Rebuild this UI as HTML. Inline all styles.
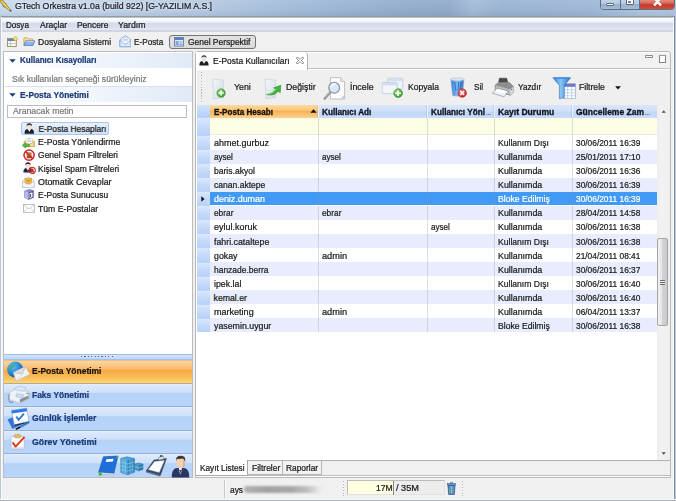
<!DOCTYPE html>
<html><head><meta charset="utf-8"><title>GTech Orkestra</title>
<style>
*{box-sizing:border-box;margin:0;padding:0}
html,body{width:676px;height:501px;overflow:hidden}
body{position:relative;background:#f0f0f0;font-family:"Liberation Sans",sans-serif;font-size:8.4px;color:#1a1a1a}
.a{position:absolute}
.t{position:absolute;white-space:nowrap;-webkit-text-stroke:0.22px currentColor;line-height:12px;height:12px;transform-origin:0 50%;letter-spacing:0}
#title{left:0;top:0;width:676px;height:16.5px;background:linear-gradient(180deg,rgba(255,255,255,0.10) 0,rgba(255,255,255,0) 60%,rgba(60,80,110,0.10) 100%),linear-gradient(100deg,#c8d9eb 0,#c0d2e7 15%,#b4c8e1 30%,#a0b9d6 45%,#93adcb 58%,#8fa9c8 66%,#a3bad6 70%,#99b2d0 74%,#9fb7d4 88%,#aec4dd 94%,#b0c5de 100%)}
#client{left:0;top:16.8px;width:676px;height:484.5px;background:#f0f0f0}
#menubar{left:1px;top:16px;width:673px;height:16px;background:linear-gradient(180deg,#8e9aa4 0,#8e9aa4 1.3px,#ffffff 1.8px,#ffffff 3.2px,#eef1f9 5.4px,#e4e8f4 6.9px,#d3d8ec 7.3px,#d8ddef 10px,#e2e6f4 14px,#d0d5e0 14.5px,#d0d5e0 15.6px,#f0f0f0 15.9px)}
.nb{left:3.8px;width:187.8px;height:23.6px;background:linear-gradient(180deg,#dce9fc 0,#d0e1fb 34%,#b5d2f9 40%,#bad5fa 100%);border-bottom:1px solid #8fb0e0;border-top:1px solid #e3edfc}
</style></head><body>
<div class="a" id="title"></div>
<div class="a" id="client"></div>
<div class="a" id="menubar"></div>

<div class="a" style="left:0;top:16.5px;width:0.9px;height:484.5px;background:#bcc6d3"></div>
<div class="a" style="left:0.9px;top:16.5px;width:0.8px;height:484.5px;background:#f8f9fb"></div>
<div class="a" style="left:673.2px;top:17px;width:0.9px;height:483px;background:#fbfbfc"></div><div class="a" style="left:674.1px;top:16.3px;width:1px;height:484.7px;background:#838e9c"></div>
<div class="a" style="left:675px;top:10px;width:1px;height:491px;background:#b0c4da"></div>
<div class="a" style="left:0;top:499.7px;width:676px;height:1.3px;background:linear-gradient(180deg,#b8bec6,#9aa3ad)"></div>
<div class="a" style="left:0;top:499px;width:676px;height:0.7px;background:#fafafa"></div>
<!-- title buttons -->
<div class="a" style="left:599.5px;top:-3px;width:75px;height:12.8px;border:1px solid #5c6f8a;border-radius:0 0 3.5px 3.5px;overflow:hidden;background:#a9c0dc">
  <div class="a" style="left:0;top:0;width:20.3px;height:13px;background:linear-gradient(180deg,#c9d9ea 0,#b3c8e0 45%,#98b1cf 50%,#a8c0dc 100%);border-right:1px solid #5c6f8a"></div>
  <div class="a" style="left:20.3px;top:0;width:19.3px;height:13px;background:linear-gradient(180deg,#c9d9ea 0,#b3c8e0 45%,#98b1cf 50%,#a8c0dc 100%);border-right:1px solid #5c6f8a"></div>
  <div class="a" style="left:39.6px;top:0;width:36px;height:13px;background:linear-gradient(180deg,#e8a090 0,#d8675a 40%,#c43a2c 52%,#cf4a35 80%,#e07a55 100%)"></div>
</div>
<div class="a" style="left:605.6px;top:2.9px;width:8.8px;height:3px;background:#fff;border:0.7px solid #5a6678;border-radius:1px"></div>
<div class="a" style="left:626px;top:-1px;width:7.6px;height:6.4px;background:#fff;border:0.7px solid #5a6678;border-radius:1px"></div>
<div class="a" style="left:628.4px;top:1.2px;width:2.8px;height:1.8px;background:#6c86a8"></div>
<svg class="a" style="left:653px;top:-2px" width="9" height="8" viewBox="0 0 9 8"><path d="M1.2 0 L4.5 3.4 L7.8 0 M1.2 7.4 L4.5 4 L7.8 7.4" stroke="#fff" stroke-width="2" fill="none"/><path d="M4.5 3.7 L1 0 M4.5 3.7 L8 0 M4.5 3.7 L1 7.4 M4.5 3.7 L8 7.4" stroke="#fff" stroke-width="1.9" fill="none"/></svg>
<!-- title icon (trumpet) -->
<svg class="a" style="left:0;top:0" width="13" height="13" viewBox="0 0 13 13"><path d="M0 0 L2.6 0 L4 2.2 Q5.4 2.4 5.6 3.8 Q7.2 4.4 7 5.8 L10.6 9.6 L9.6 10.6 L5.4 7.4 Q3.8 7.6 3.6 6 Q2.2 5.6 2.4 4.2 L0 1.4Z" fill="#dcc23a" stroke="#6a5a1c" stroke-width="0.55"/><path d="M1 0.6 L9.4 9.6" stroke="#fff6a8" stroke-width="0.6"/><circle cx="3.6" cy="6.4" r="0.6" fill="#3c4cd0"/><circle cx="10.6" cy="10.8" r="1" fill="#5a5a5a"/></svg>

<!-- perspective bar icons -->
<svg class="a" style="left:7px;top:35.8px" width="11" height="11" viewBox="0 0 13 13"><rect x="0.6" y="3" width="10.4" height="9.4" fill="#fbfaf2" stroke="#8a8568" stroke-width="1"/><rect x="1.1" y="3.5" width="9.4" height="2.4" fill="#5f86c2"/><path d="M4.2 5.9V12 M1 9H10.6" stroke="#b9b48f" stroke-width="0.8"/><path d="M10 0.2 L12.8 3.2 L10 6.2 L7.2 3.2Z" fill="#f9dc6a" stroke="#b8922a" stroke-width="0.6"/></svg>
<svg class="a" style="left:22.6px;top:37.2px" width="12.6" height="9.2" viewBox="0 0 13 10"><path d="M0.6 9 V1.6 Q0.6 0.8 1.4 0.8 H4 L5 2 H9.6 Q10.3 2 10.3 2.8 V4" fill="#f8e3a0" stroke="#c39a3e" stroke-width="0.8"/><path d="M0.7 9.3 L2.6 4.2 H12.4 L10.4 9.3 Z" fill="#8db3ea" stroke="#456fbc" stroke-width="0.8"/><path d="M3 5 H11.6" stroke="#d3e3f8" stroke-width="0.9"/></svg>
<svg class="a" style="left:118.6px;top:35.4px" width="12.8" height="12.6" viewBox="0 0 13 13"><path d="M0.7 5 L6.5 0.6 L12.3 5 V12.2 H0.7Z" fill="#e3edfb" stroke="#86a6dc" stroke-width="0.9"/><rect x="2.6" y="3" width="7.8" height="6" fill="#fff" stroke="#a9bfe4" stroke-width="0.6"/><path d="M3.8 4.6h5.4M3.8 6h5.4" stroke="#9cbbea" stroke-width="0.7"/><path d="M0.9 5.6 L6.5 9.6 L12.1 5.6 V12 H0.9Z" fill="#dce8fa" stroke="#86a6dc" stroke-width="0.7"/></svg>
<!-- Genel Perspektif button -->
<div class="a" style="left:169.4px;top:34.6px;width:86.2px;height:14.6px;border:1.2px solid #747474;border-radius:3px;background:linear-gradient(180deg,#e3e3e3,#dbdbdb)"></div>
<svg class="a" style="left:174.2px;top:37px" width="10" height="10" viewBox="0 0 10 10"><rect x="0.5" y="0.5" width="9" height="8.6" fill="#dfe8f6" stroke="#6b7f9e" stroke-width="0.9"/><rect x="0.9" y="0.9" width="8.2" height="2" fill="#4f79bd"/><rect x="1.6" y="4" width="3" height="4.2" fill="#7fa3dc"/><rect x="5.4" y="4" width="3" height="2" fill="#a9c3ea"/><rect x="5.4" y="6.6" width="3" height="1.6" fill="#7fa3dc"/></svg>
<!-- LEFT PANEL -->
<div class="a" style="left:2.8px;top:51.4px;width:189.8px;height:426.8px;background:#fff;border:1px solid #bdbdbd"></div>
<div class="a" style="left:3.8px;top:52.6px;width:187.8px;height:15px;background:linear-gradient(90deg,#ffffff 0,#f5f8fd 35%,#e0eaf7 100%)"></div>
<div class="a" style="left:3.8px;top:86px;width:187.8px;height:16px;background:linear-gradient(90deg,#ffffff 0,#f5f8fd 35%,#e0eaf7 100%);border-top:1px solid #d5e1f2"></div>
<svg class="a" style="left:8.8px;top:58.8px" width="7" height="4" viewBox="0 0 7 4"><path d="M0.2 0.2H6.8L3.5 3.8Z" fill="#1b3a78"/></svg>
<svg class="a" style="left:8.8px;top:93px" width="7" height="4" viewBox="0 0 7 4"><path d="M0.2 0.2H6.8L3.5 3.8Z" fill="#1b3a78"/></svg>
<div class="a" style="left:6.6px;top:104.6px;width:180.6px;height:13.2px;background:#fff;border:1px solid #b9bcc2"></div>
<!-- tree selection -->
<div class="a" style="left:21.2px;top:122.3px;width:87.9px;height:12.9px;border:1px solid #a9c5ee;border-radius:2px;background:linear-gradient(180deg,#e9f1fc,#d2e2f8)"></div>
<!-- splitter -->
<div class="a" style="left:3.8px;top:353.6px;width:187.8px;height:6.6px;background:linear-gradient(180deg,#d4e4fb,#bfd7fa);border-top:1px solid #9ebde8;border-bottom:1px solid #a4c0e6"></div>
<div class="a" style="left:80.5px;top:356.2px;width:32px;height:1.2px;background:repeating-linear-gradient(90deg,#4b6a9c 0,#4b6a9c 1.2px,transparent 1.2px,transparent 3.4px)"></div>
<!-- nav buttons -->
<div class="a" style="left:3.8px;top:360px;width:187.8px;height:23.6px;background:linear-gradient(180deg,#fbd6a5 0,#f9bb69 37%,#f7a842 43%,#f9bb56 72%,#fcd774 100%);border-top:1px solid #e9c08a;border-bottom:1px solid #b9a98a"></div>
<div class="a nb" style="top:383.6px"></div>
<div class="a nb" style="top:407.2px"></div>
<div class="a nb" style="top:430.8px"></div>
<div class="a nb" style="top:454.4px;height:22.8px;border-bottom:0"></div>
<!-- RIGHT PANEL (tab folder) -->
<div class="a" style="left:194.6px;top:51.3px;width:476.8px;height:427.2px;background:#fff;border:1.1px solid #b9b9b9;border-radius:3px 3px 0 0"></div>
<div class="a" style="left:197.3px;top:70.2px;width:472.6px;height:35.2px;background:#efefef"></div>
<div class="a" style="left:195.8px;top:52.6px;width:474.4px;height:16.8px;background:#f1f1f1;border-bottom:1px solid #c2c2c2"></div>
<div class="a" style="left:195.8px;top:52.4px;width:112.2px;height:18px;background:#fff;border-right:1px solid #b0b0b0;border-radius:0 3.5px 0 0"></div>
<!-- min/max -->
<div class="a" style="left:645.3px;top:55.2px;width:7.7px;height:2.9px;border:0.8px solid #8e8e8e;background:#fff;border-radius:0.8px"></div>
<div class="a" style="left:658.8px;top:55.2px;width:7.2px;height:7.4px;border:0.8px solid #858585;border-top:1.9px solid #9a9a9a;background:#fff"></div>
<!-- tab close -->
<svg class="a" style="left:295.6px;top:57.4px" width="8" height="7" viewBox="0 0 8 7"><path d="M0.6 0.6 L2.2 0.6 L4 2.4 L5.8 0.6 L7.4 0.6 L7.4 1.6 L5.4 3.5 L7.4 5.4 V6.4 H5.8 L4 4.6 L2.2 6.4 H0.6 V5.4 L2.6 3.5 L0.6 1.6Z" fill="#fff" stroke="#666" stroke-width="0.7"/></svg>
<!-- tab icon: person -->
<svg class="a" style="left:198.8px;top:55px" width="10" height="11" viewBox="0 0 10 11"><path d="M0.4 10.6 Q0.2 6.6 3 6 L5 8 L7 6 Q9.8 6.6 9.6 10.6Z" fill="#1c1f26"/><path d="M4.1 6.2 L5 9 L5.9 6.2Z" fill="#fff"/><ellipse cx="5" cy="3.4" rx="2.4" ry="2.9" fill="#f0e2d4"/><path d="M2.5 3 Q2.4 0.2 5 0.3 Q7.6 0.2 7.5 3 Q6.6 1.6 5 1.8 Q3.4 1.6 2.5 3Z" fill="#3a3a3a"/></svg>
<!-- toolbar handle -->
<div class="a" style="left:200.5px;top:72.4px;width:1.4px;height:30.6px;background:repeating-linear-gradient(180deg,#b4b4b4 0,#b4b4b4 1.3px,#fafafa 1.3px,#fafafa 2px,transparent 2px,transparent 2.9px)"></div>
<!-- TABLE -->
<div class="a" style="left:197.4px;top:105.2px;width:459.2px;height:355px;background:#fff"></div>
<!-- header -->
<div class="a" style="left:197.4px;top:105.2px;width:459.2px;height:12.5px;background:linear-gradient(180deg,#d9e6fb 0,#cfe0fa 45%,#c2d7f7 55%,#c9dcf9 100%)"></div>
<div class="a" style="left:210.2px;top:105.2px;width:108.3px;height:12.5px;background:linear-gradient(180deg,#fcdba6 0,#fbc978 35%,#f8b35a 50%,#fac274 75%,#fcd190 100%)"></div>
<svg class="a" style="left:309.8px;top:109.4px" width="7" height="3.9" viewBox="0 0 7 4"><path d="M0.2 3.8H6.8L3.5 0.2Z" fill="#111"/></svg>
<!-- filter row -->
<div class="a" style="left:210.2px;top:117.7px;width:446.4px;height:17.3px;background:#fefee6;border-bottom:1px solid #ececdc"></div>
<div class="a" style="left:210.2px;top:135.65px;width:446.4px;height:14.10px;background:#ffffff"></div>
<div class="a" style="left:210.2px;top:149.70px;width:446.4px;height:14.10px;background:#e8ecfc"></div>
<div class="a" style="left:210.2px;top:163.75px;width:446.4px;height:14.10px;background:#ffffff"></div>
<div class="a" style="left:210.2px;top:177.80px;width:446.4px;height:14.10px;background:#e8ecfc"></div>
<div class="a" style="left:210.2px;top:191.85px;width:446.4px;height:13.10px;background:#419af5"></div>
<div class="a" style="left:210.2px;top:205.90px;width:446.4px;height:14.10px;background:#e8ecfc"></div>
<div class="a" style="left:210.2px;top:219.95px;width:446.4px;height:14.10px;background:#ffffff"></div>
<div class="a" style="left:210.2px;top:234.00px;width:446.4px;height:14.10px;background:#e8ecfc"></div>
<div class="a" style="left:210.2px;top:248.05px;width:446.4px;height:14.10px;background:#ffffff"></div>
<div class="a" style="left:210.2px;top:262.10px;width:446.4px;height:14.10px;background:#e8ecfc"></div>
<div class="a" style="left:210.2px;top:276.15px;width:446.4px;height:14.10px;background:#ffffff"></div>
<div class="a" style="left:210.2px;top:290.20px;width:446.4px;height:14.10px;background:#e8ecfc"></div>
<div class="a" style="left:210.2px;top:304.25px;width:446.4px;height:14.10px;background:#ffffff"></div>
<div class="a" style="left:210.2px;top:318.30px;width:446.4px;height:14.10px;background:#e8ecfc"></div>
<div class="a" style="left:197.4px;top:105.2px;width:12.8px;height:227.15px;background:#bcd4f8"></div>
<div class="a" style="left:197.4px;top:105.2px;width:12.6px;height:12.3px;background:linear-gradient(180deg,#d3e3fb,#b4cff7)"></div>
<div class="a" style="left:197.4px;top:118px;width:12.6px;height:17.4px;background:linear-gradient(180deg,#dbe8fc 0,#c9dcfa 40%,#b9d2f8 100%)"></div>
<div class="a" style="left:197.4px;top:136.05px;width:12.6px;height:13.55px;background:linear-gradient(180deg,#dbe8fc 0,#c9dcfa 40%,#b9d2f8 100%)"></div>
<div class="a" style="left:197.4px;top:150.10px;width:12.6px;height:13.55px;background:linear-gradient(180deg,#dbe8fc 0,#c9dcfa 40%,#b9d2f8 100%)"></div>
<div class="a" style="left:197.4px;top:164.15px;width:12.6px;height:13.55px;background:linear-gradient(180deg,#dbe8fc 0,#c9dcfa 40%,#b9d2f8 100%)"></div>
<div class="a" style="left:197.4px;top:178.20px;width:12.6px;height:13.55px;background:linear-gradient(180deg,#dbe8fc 0,#c9dcfa 40%,#b9d2f8 100%)"></div>
<div class="a" style="left:197.4px;top:192.25px;width:12.6px;height:13.55px;background:linear-gradient(180deg,#dbe8fc 0,#c9dcfa 40%,#b9d2f8 100%)"></div>
<div class="a" style="left:197.4px;top:206.30px;width:12.6px;height:13.55px;background:linear-gradient(180deg,#dbe8fc 0,#c9dcfa 40%,#b9d2f8 100%)"></div>
<div class="a" style="left:197.4px;top:220.35px;width:12.6px;height:13.55px;background:linear-gradient(180deg,#dbe8fc 0,#c9dcfa 40%,#b9d2f8 100%)"></div>
<div class="a" style="left:197.4px;top:234.40px;width:12.6px;height:13.55px;background:linear-gradient(180deg,#dbe8fc 0,#c9dcfa 40%,#b9d2f8 100%)"></div>
<div class="a" style="left:197.4px;top:248.45px;width:12.6px;height:13.55px;background:linear-gradient(180deg,#dbe8fc 0,#c9dcfa 40%,#b9d2f8 100%)"></div>
<div class="a" style="left:197.4px;top:262.50px;width:12.6px;height:13.55px;background:linear-gradient(180deg,#dbe8fc 0,#c9dcfa 40%,#b9d2f8 100%)"></div>
<div class="a" style="left:197.4px;top:276.55px;width:12.6px;height:13.55px;background:linear-gradient(180deg,#dbe8fc 0,#c9dcfa 40%,#b9d2f8 100%)"></div>
<div class="a" style="left:197.4px;top:290.60px;width:12.6px;height:13.55px;background:linear-gradient(180deg,#dbe8fc 0,#c9dcfa 40%,#b9d2f8 100%)"></div>
<div class="a" style="left:197.4px;top:304.65px;width:12.6px;height:13.55px;background:linear-gradient(180deg,#dbe8fc 0,#c9dcfa 40%,#b9d2f8 100%)"></div>
<div class="a" style="left:197.4px;top:318.70px;width:12.6px;height:13.55px;background:linear-gradient(180deg,#dbe8fc 0,#c9dcfa 40%,#b9d2f8 100%)"></div>
<div class="a" style="left:318.1px;top:117.7px;width:1px;height:214.65px;background:rgba(150,150,155,0.30)"></div>
<div class="a" style="left:318.1px;top:105.2px;width:1px;height:12.5px;background:rgba(255,255,255,0.7)"></div>
<div class="a" style="left:317.1px;top:105.2px;width:1px;height:12.5px;background:rgba(120,150,200,0.25)"></div>
<div class="a" style="left:426.9px;top:117.7px;width:1px;height:214.65px;background:rgba(150,150,155,0.30)"></div>
<div class="a" style="left:426.9px;top:105.2px;width:1px;height:12.5px;background:rgba(255,255,255,0.7)"></div>
<div class="a" style="left:425.9px;top:105.2px;width:1px;height:12.5px;background:rgba(120,150,200,0.25)"></div>
<div class="a" style="left:493.9px;top:117.7px;width:1px;height:214.65px;background:rgba(150,150,155,0.30)"></div>
<div class="a" style="left:493.9px;top:105.2px;width:1px;height:12.5px;background:rgba(255,255,255,0.7)"></div>
<div class="a" style="left:492.9px;top:105.2px;width:1px;height:12.5px;background:rgba(120,150,200,0.25)"></div>
<div class="a" style="left:572.0px;top:117.7px;width:1px;height:214.65px;background:rgba(150,150,155,0.30)"></div>
<div class="a" style="left:572.0px;top:105.2px;width:1px;height:12.5px;background:rgba(255,255,255,0.7)"></div>
<div class="a" style="left:571.0px;top:105.2px;width:1px;height:12.5px;background:rgba(120,150,200,0.25)"></div>
<svg class="a" style="left:201.2px;top:196.45px" width="4" height="6" viewBox="0 0 4 6"><path d="M0.3 0.2V5.8L3.6 3Z" fill="#111"/></svg>
<!-- scrollbar -->
<div class="a" style="left:656.6px;top:105.2px;width:13.3px;height:354.6px;background:linear-gradient(90deg,#ececec,#f2f2f2 30%,#efefef)"></div>
<div class="a" style="left:657.2px;top:237.7px;width:11.3px;height:88.7px;border:1px solid #a4a4a4;border-radius:2px;background:linear-gradient(90deg,#f2f2f2 0,#e6e6e7 40%,#d0d1d4 52%,#c9cacd 100%)"></div>
<div class="a" style="left:660.2px;top:279.8px;width:4.8px;height:5.2px;background:repeating-linear-gradient(180deg,#707070 0,#707070 0.9px,#e8e8e8 0.9px,#e8e8e8 1.9px)"></div>
<svg class="a" style="left:660.8px;top:110px" width="5.4" height="3" viewBox="0 0 6 4"><path d="M0.2 3.6H5.8L3 0.3Z" fill="#4a4a4a"/></svg>
<svg class="a" style="left:660.8px;top:452px" width="5.4" height="3" viewBox="0 0 6 4"><path d="M0.2 0.4H5.8L3 3.7Z" fill="#4a4a4a"/></svg>
<!-- bottom tab strip -->
<div class="a" style="left:197.3px;top:459.8px;width:472.6px;height:16.4px;background:#f0f0f0;border-top:1px solid #b0b0b0;border-bottom:1px solid #bdbdbd"></div>
<div class="a" style="left:247.3px;top:460.8px;width:35.3px;height:14.6px;border-right:1px solid #b5b5b5;border-bottom:1px solid #b5b5b5;background:#f2f2f2"></div>
<div class="a" style="left:282.6px;top:460.8px;width:39.2px;height:14.6px;border-right:1px solid #b5b5b5;border-bottom:1px solid #b5b5b5;background:#f2f2f2"></div>
<div class="a" style="left:195.8px;top:459.8px;width:51.8px;height:16.4px;background:#fff;border-right:1px solid #a6a6a6;border-bottom:1px solid #a6a6a6;border-radius:0 0 2px 0"></div>
<!-- STATUS BAR -->
<div class="a" style="left:223.7px;top:479.6px;width:1px;height:18.6px;background:#c6c6c6"></div><div class="a" style="left:224.7px;top:479.6px;width:0.8px;height:18.6px;background:#fbfbfb"></div>
<div class="a" style="left:243.5px;top:486.2px;width:80px;height:6.6px;border-radius:3px;background:linear-gradient(90deg,#b2b2b2 0,#a2a2a2 30%,#a8a8a8 60%,rgba(176,176,176,0.75) 80%,rgba(215,215,215,0.35) 93%,rgba(240,240,240,0) 100%);filter:blur(1px)"></div>
<div class="a" style="left:342.8px;top:481px;width:1.2px;height:14.6px;background:repeating-linear-gradient(180deg,#b2b2b2 0,#b2b2b2 1.3px,#fafafa 1.3px,#fafafa 2px,transparent 2px,transparent 2.9px)"></div>
<div class="a" style="left:461.6px;top:481px;width:1.2px;height:14.6px;background:repeating-linear-gradient(180deg,#b2b2b2 0,#b2b2b2 1.3px,#fafafa 1.3px,#fafafa 2px,transparent 2px,transparent 2.9px)"></div>
<div class="a" style="left:347.4px;top:480.2px;width:98px;height:15.2px;background:linear-gradient(90deg,#ffffe1 0,#ffffe1 46px,#ededed 46px,#ededed 100%);border:1px solid #bcbcbc;border-right-color:#e2e2e2;border-bottom-color:#e2e2e2"></div>
<div class="a" style="left:393.4px;top:481px;width:0.9px;height:13.6px;background:#8a8a8a"></div>
<svg class="a" style="left:446.6px;top:481.6px" width="9" height="13" viewBox="0 0 9 13"><path d="M1 3 H8 L7.4 12.4 H1.6Z" fill="#3f7cc4" stroke="#28508c" stroke-width="0.7"/><path d="M3 4V11.6M4.5 4V11.6M6 4V11.6" stroke="#a9d4a8" stroke-width="0.7"/><rect x="0.4" y="1.6" width="8.2" height="1.5" fill="#6f9fd8" stroke="#28508c" stroke-width="0.5"/><rect x="3.2" y="0.5" width="2.6" height="1.1" fill="#8fb5e6" stroke="#2f5792" stroke-width="0.4"/></svg>
<!-- TREE ICONS -->
<svg class="a" style="left:23.6px;top:123.4px" width="10.6" height="11.2" viewBox="0 0 10 11"><path d="M0.4 10.6 Q0.2 6.6 3 6 L5 8 L7 6 Q9.8 6.6 9.6 10.6Z" fill="#1c1f26"/><path d="M4.1 6.2 L5 9 L5.9 6.2Z" fill="#fff"/><ellipse cx="5" cy="3.5" rx="2.4" ry="2.8" fill="#f0e2d4"/><path d="M2.4 3.2 Q2.2 0.2 5 0.3 Q7.8 0.2 7.6 3.2 Q6.6 1.8 5 2 Q3.4 1.8 2.4 3.2Z" fill="#333"/></svg>
<svg class="a" style="left:22.4px;top:136.6px" width="13" height="11.4" viewBox="0 0 13 11.4"><path d="M2.2 4.4 L7.2 0.8 L12.4 4.4 V9.6 H2.2Z" fill="#f2cf6b" stroke="#c79a2c" stroke-width="0.6"/><rect x="4" y="1.6" width="6.4" height="5" fill="#fff" stroke="#c9d3e6" stroke-width="0.5"/><path d="M5 3h4.4M5 4.4h4.4" stroke="#8fb0e6" stroke-width="0.6"/><path d="M2.3 4.8 L7.3 7.6 L12.3 4.8 V9.5 H2.3Z" fill="#f6dc8e" stroke="#c79a2c" stroke-width="0.5"/><path d="M0.2 8.4 L3.6 5.8 V7.4 H7.4 V9.6 H3.6 V11.2Z" fill="#4cb83c" stroke="#2a8a22" stroke-width="0.5"/></svg>
<svg class="a" style="left:22.8px;top:149.4px" width="12.2" height="12.2" viewBox="0 0 12 12"><rect x="3.6" y="3.4" width="4.8" height="5.6" rx="0.6" fill="#8a5a22"/><rect x="4.2" y="4.4" width="3.6" height="2" fill="#d9a441"/><circle cx="6" cy="6" r="5" fill="none" stroke="#d6202a" stroke-width="1.5"/><path d="M2.5 2.5 L9.5 9.5" stroke="#d6202a" stroke-width="1.5"/></svg>
<svg class="a" style="left:22.8px;top:162.4px" width="13" height="12.2" viewBox="0 0 13 12.2"><path d="M0.4 10.6 Q0.2 6.6 3 6 L5 8 L7 6 Q9.8 6.6 9.6 10.6Z" fill="#1f2a44"/><path d="M4.1 6.2 L5 9 L5.9 6.2Z" fill="#fff"/><ellipse cx="5" cy="3.5" rx="2.4" ry="2.8" fill="#f0e2d4"/><path d="M2.4 3.2 Q2.2 0.2 5 0.3 Q7.8 0.2 7.6 3.2 Q6.6 1.8 5 2 Q3.4 1.8 2.4 3.2Z" fill="#333"/><rect x="7.6" y="6.6" width="3" height="3.6" fill="#8a5a22"/><circle cx="9.2" cy="8.4" r="3.1" fill="none" stroke="#d6202a" stroke-width="1.1"/><path d="M7 6.2 L11.4 10.6" stroke="#d6202a" stroke-width="1.1"/></svg>
<svg class="a" style="left:22.4px;top:176px" width="12.8" height="12.2" viewBox="0 0 12.8 12.2"><path d="M0.6 5 L6.4 0.8 L12.2 5 V11.6 H0.6Z" fill="#f4f6f9" stroke="#aab4c4" stroke-width="0.6"/><rect x="3" y="2.4" width="6.8" height="5.4" fill="#f4b942" stroke="#cf922a" stroke-width="0.5"/><path d="M4.6 4.8h3.6" stroke="#a86a1a" stroke-width="0.7"/><path d="M0.7 5.4 L6.4 9 L12.1 5.4 V11.5 H0.7Z" fill="#fbfcfd" stroke="#aab4c4" stroke-width="0.5"/><path d="M0.8 11.4 L5 8.2 M12 11.4 L7.8 8.2" stroke="#c2cad6" stroke-width="0.5"/></svg>
<svg class="a" style="left:24.4px;top:189.4px" width="10" height="11" viewBox="0 0 10 11"><path d="M0.6 2 L5.6 0.4 L9.4 1.6 V8.6 L4.4 10.6 L0.6 8.4Z" fill="#8f8fd0" stroke="#55559a" stroke-width="0.5"/><path d="M4.4 3.2 L9.4 1.6 V8.6 L4.4 10.6Z" fill="#5c5ca8"/><path d="M0.6 2 L4.4 3.2 V10.6 L0.6 8.4Z" fill="#b9b9e8"/><path d="M5.6 4.2 L8.4 3.4 V8 L5.6 9Z" fill="#fff"/><path d="M6.6 5v3" stroke="#333" stroke-width="0.9"/></svg>
<svg class="a" style="left:22.8px;top:204.2px" width="12" height="8.8" viewBox="0 0 12 8.8"><rect x="0.5" y="0.5" width="11" height="7.8" fill="#fdfdfd" stroke="#a9a9a9" stroke-width="0.7"/><path d="M0.6 0.6 L6 5 L11.4 0.6 M0.6 8.2 L4.6 4 M11.4 8.2 L7.4 4" stroke="#b4b4b4" stroke-width="0.6" fill="none"/></svg>
<!-- TOOLBAR ICONS -->
<svg class="a" style="left:211px;top:76px" width="17" height="24" viewBox="0 0 17 24">
<defs><linearGradient id="pg" x1="0" y1="0" x2="1" y2="1"><stop offset="0" stop-color="#f4f6fa"/><stop offset="1" stop-color="#d4dbe6"/></linearGradient>
<radialGradient id="gr" cx="0.4" cy="0.35" r="0.7"><stop offset="0" stop-color="#9be07a"/><stop offset="1" stop-color="#2f9a2a"/></radialGradient>
<radialGradient id="rd" cx="0.4" cy="0.35" r="0.7"><stop offset="0" stop-color="#f58a80"/><stop offset="1" stop-color="#c8161c"/></radialGradient></defs>
<path d="M1.8 3 L12.4 4.2 L12.6 21.8 L2.4 22.8Z" fill="url(#pg)" stroke="#c3cbd8" stroke-width="0.6"/>
<circle cx="10.1" cy="17" r="4.2" fill="url(#gr)" stroke="#2a8a26" stroke-width="0.5"/><path d="M10.1 14.4V19.6M7.5 17H12.7" stroke="#fff" stroke-width="1.5"/></svg>
<svg class="a" style="left:263px;top:76px" width="19" height="24" viewBox="0 0 19 24">
<path d="M2.2 3 L12.6 4.2 L12.8 21.6 L2.8 22.6Z" fill="url(#pg)" stroke="#c3cbd8" stroke-width="0.6"/>
<path d="M3.6 18.6 Q9.5 17.8 12.6 13.2 L10.6 11.8 L17.8 9.2 L17.2 16.8 L15.2 15.2 Q11 20.4 3.6 18.6Z" fill="#3fb43a" stroke="#23861f" stroke-width="0.5"/><path d="M5.6 18 Q10.5 17 13.6 12.6" stroke="#a6e88e" stroke-width="0.8" fill="none"/></svg>
<svg class="a" style="left:323px;top:76px" width="23" height="24" viewBox="0 0 23 24">
<path d="M7.4 1.6 H17.6 L21.6 5.6 V23 H7.4Z" fill="#fdfdfd" stroke="#a8a8a8" stroke-width="0.7"/><path d="M17.6 1.6 V5.6 H21.6" fill="#e8e8e8" stroke="#a8a8a8" stroke-width="0.6"/><path d="M17.5 22.8 L21.4 22.8 L21.4 18.8Z" fill="#b9cdf0"/>
<path d="M7.4 16 L1.8 22.6" stroke="#8a8a8a" stroke-width="2.3" stroke-linecap="round"/><path d="M7.4 15.4 L2.4 21.6" stroke="#c8c8c8" stroke-width="0.8" stroke-linecap="round"/>
<circle cx="11.2" cy="11.8" r="5.4" fill="#d6e8fb" stroke="#8e959e" stroke-width="1.3"/><path d="M8 10.4 Q9.4 7.8 12.2 7.8" stroke="#fff" stroke-width="1.4" fill="none" stroke-linecap="round"/></svg>
<svg class="a" style="left:381px;top:76px" width="23" height="24" viewBox="0 0 23 24">
<rect x="6.8" y="2.2" width="15" height="10.8" rx="1" fill="#edf2f8" stroke="#b4c4d6" stroke-width="0.7"/><rect x="7.4" y="2.8" width="13.8" height="2.2" fill="#d0deee"/>
<rect x="1.2" y="6.4" width="15" height="11.2" rx="1" fill="#f3f6fa" stroke="#b4c4d6" stroke-width="0.7"/><rect x="1.8" y="7" width="13.8" height="2.4" fill="#d0deee"/>
<circle cx="17.1" cy="17.2" r="4.4" fill="url(#gr)" stroke="#2a8a26" stroke-width="0.5"/><path d="M17.1 14.4V20M14.3 17.2H19.9" stroke="#fff" stroke-width="1.6"/></svg>
<svg class="a" style="left:449px;top:76px" width="19" height="24" viewBox="0 0 19 24">
<defs><linearGradient id="bn" x1="0" y1="0" x2="1" y2="0"><stop offset="0" stop-color="#2f7fdc"/><stop offset="0.5" stop-color="#7fc0f6"/><stop offset="1" stop-color="#2b6fc8"/></linearGradient></defs>
<path d="M1.8 3.6 H15 L13.4 19.6 Q8.4 20.8 3.6 19.6Z" fill="url(#bn)" stroke="#9fb0c4" stroke-width="0.6"/><ellipse cx="8.4" cy="3.4" rx="6.8" ry="1.5" fill="#dfe6ee" stroke="#a9b6c6" stroke-width="0.6"/>
<path d="M5.6 6 L7 15 M9.6 6 L9 14 M12.4 6 L11 13" stroke="#1f5fb4" stroke-width="1.1" opacity="0.7"/>
<circle cx="13.2" cy="17" r="4.3" fill="url(#rd)" stroke="#a01218" stroke-width="0.5"/><path d="M11.2 15 L15.2 19 M15.2 15 L11.2 19" stroke="#fff" stroke-width="1.5"/></svg>
<svg class="a" style="left:491px;top:76px" width="25" height="24" viewBox="0 0 25 24">
<path d="M8.4 2.2 L15.6 2.2 L17.4 8.6 L7.2 8.6Z" fill="#4a4a4a" stroke="#2e2e2e" stroke-width="0.5"/>
<path d="M4.2 9 L7.6 6.6 H18.4 L22.6 10.6 V16.2 L19.4 19.2 L4.2 15.2Z" fill="#b9b9b9" stroke="#6e6e6e" stroke-width="0.6"/><path d="M4.4 9.2 L7.6 6.8 H18.2 L22.2 10.6 L18.8 13.2Z" fill="#8e8e8e"/>
<path d="M19 13.4 L22.6 10.8 V16.2 L19.4 19.2Z" fill="#d8d8d8"/><circle cx="20.6" cy="13.4" r="0.7" fill="#2a5adf"/>
<path d="M1.2 17.2 L6.2 12.4 L17.4 15 L13.2 20.8Z" fill="#eaf3fb" stroke="#7c8894" stroke-width="0.6"/><path d="M4.2 15.2 L6.4 13 L15.6 15.2 L13.8 17.6Z" fill="#fff"/></svg>
<svg class="a" style="left:552px;top:76px" width="25" height="24" viewBox="0 0 25 24">
<defs><linearGradient id="fn" x1="0" y1="0" x2="1" y2="0"><stop offset="0" stop-color="#2d7dd2"/><stop offset="0.45" stop-color="#86c8f6"/><stop offset="1" stop-color="#2a6cc0"/></linearGradient></defs>
<rect x="11.6" y="7.8" width="11.8" height="14.8" fill="#fff" stroke="#8aa0c8" stroke-width="0.6"/><rect x="11.6" y="7.8" width="11.8" height="3" fill="#6a78c4"/>
<path d="M11.6 13.8H23.4M11.6 16.8H23.4M11.6 19.8H23.4M15.6 10.8V22.6M19.6 10.8V22.6" stroke="#a9c4ea" stroke-width="0.7"/>
<path d="M0.8 1.8 H18.6 L12.4 9.4 V21.6 L7.4 22.8 V9.4Z" fill="url(#fn)" stroke="#2862ae" stroke-width="0.5"/><ellipse cx="9.7" cy="2" rx="8.9" ry="1.1" fill="#4a94e0"/></svg>
<svg class="a" style="left:615px;top:86px" width="6" height="4" viewBox="0 0 6 4"><path d="M0.1 0.3H5.9L3 3.6Z" fill="#111"/></svg>
<!-- NAV ICONS -->
<svg class="a" style="left:6px;top:360px" width="25" height="23" viewBox="0 0 25 23">
<defs><radialGradient id="gl" cx="0.35" cy="0.3" r="0.8"><stop offset="0" stop-color="#6cc4f4"/><stop offset="0.6" stop-color="#1f7fd0"/><stop offset="1" stop-color="#0e4f9a"/></radialGradient></defs>
<circle cx="9.2" cy="9.6" r="8" fill="url(#gl)"/><path d="M4 6 Q7 3 10 4.4 Q9 7 6 8.4 Q4.4 10 5 12.4 Q3 10 4 6Z M11 11 Q14 9.6 15.6 12 Q14 15 11.6 15Z" fill="#2fa86a" opacity="0.65"/>
<path d="M7.2 12.6 L19.4 6.6 L24 14.2 L10.2 21Z" fill="#f2f2f4" stroke="#b4b4b8" stroke-width="0.5"/><path d="M7.4 12.8 L16.6 13.8 L19.4 6.8" fill="#dcdce0" stroke="#a6a6ac" stroke-width="0.5"/><path d="M10.2 20.8 L16.4 14" stroke="#c2c2c6" stroke-width="0.5"/></svg>
<svg class="a" style="left:7px;top:385px" width="24" height="20" viewBox="0 0 24 20">
<path d="M2 8 L8.6 3.6 L22 6.6 V13.8 L12.6 18.2 L2 14.4Z" fill="#eef1f6" stroke="#aab3c2" stroke-width="0.6"/>
<path d="M7 3.4 L12.6 1 L19 2.6 L17.6 6.4 L9.6 5.2Z" fill="#d6e6fa" stroke="#9fb4d2" stroke-width="0.5"/>
<path d="M9.6 8.4 L17 9.8 L16.2 13.4 L9 11.8Z" fill="#c5d9f1" stroke="#9fb4d2" stroke-width="0.4"/>
<path d="M12.8 14.2 L21.6 10.4 V13.6 L12.8 17.8Z" fill="#8a8f9a"/>
<path d="M2.4 9 Q0.8 12 2.2 16 Q3.4 18.4 6 17" stroke="#8a8f9a" stroke-width="1.1" fill="none"/><circle cx="20" cy="8.4" r="0.8" fill="#5ec454"/><circle cx="21.4" cy="8.8" r="0.6" fill="#e0564a"/></svg>
<svg class="a" style="left:7px;top:406.6px" width="24" height="23" viewBox="0 0 24 23">
<path d="M0.6 12.4 L13.6 7 L17 16.6 L5.4 22Z" fill="#2f74d6"/><path d="M4.4 3.4 L19.6 1.2 L22 14.4 L7.4 17.8Z" fill="#fbfcfe" stroke="#9aa4b4" stroke-width="0.6"/><path d="M4.4 3.4 L19.6 1.2 L20.2 4.2 L5 6.6Z" fill="#2f7be0"/>
<path d="M9.4 9.6 L11.6 12.8 L17 6.6" stroke="#2a7ad8" stroke-width="1.9" fill="none"/><path d="M7.4 17.8 L22 14.4 L22.2 15.6 L7.8 19Z" fill="#2c3038"/>
<path d="M21.6 15.4 L12.2 20.6" stroke="#2f74d6" stroke-width="1.9" stroke-linecap="round"/><path d="M12.4 20.4 L9.4 22 " stroke="#111" stroke-width="1.6" stroke-linecap="round"/></svg>
<svg class="a" style="left:10px;top:433.6px" width="16" height="16" viewBox="0 0 16 16">
<rect x="1" y="2.6" width="13.2" height="12.6" rx="0.8" fill="#fdfdfe" stroke="#a9b3c6" stroke-width="0.7"/><path d="M1.6 14 H13.6" stroke="#c9d6ee" stroke-width="1.2"/>
<rect x="4.6" y="0.6" width="6" height="3.2" rx="1" fill="#e2c068" stroke="#a8883a" stroke-width="0.5"/>
<path d="M2.6 8.4 L5.6 12.6 L14.6 2.8" stroke="#e03820" stroke-width="1.9" fill="none" stroke-linejoin="round"/></svg>
<!-- bottom icons -->
<svg class="a" style="left:97px;top:455px" width="23" height="21" viewBox="0 0 23 21">
<path d="M6.4 1.8 L21 1 L16.8 18.6 L1.6 17.4Z" fill="#1f6fd8" stroke="#1450a6" stroke-width="0.6"/><path d="M1.6 17.4 L16.8 18.6 L16.4 20 L2 19Z" fill="#e8ecf2" stroke="#8e98a8" stroke-width="0.4"/>
<path d="M9.4 4.2 L16.6 3.8 L16 6.6 L8.8 7Z" fill="#fbfbfb"/><path d="M19.6 1.2 L21.6 1 L21.2 3 L19.2 3Z" fill="#58c24c"/><path d="M1.8 17.6 L5 17.8 L4.6 20.6 L1.8 20.4Z" fill="#3fb43a"/></svg>
<svg class="a" style="left:120px;top:456px" width="24" height="20" viewBox="0 0 24 20">
<path d="M0.8 2.4 L7 0.8 L14.4 2.6 V16.2 L7.6 18.8 L0.8 16.4Z" fill="#4fa6d6" stroke="#2a6e9e" stroke-width="0.5"/><path d="M7.6 4.4 L14.4 2.6 V16.2 L7.6 18.8Z" fill="#2f86bc"/>
<path d="M0.8 6 L7.6 8 L14.4 6 M0.8 9.6 L7.6 11.6 L14.4 9.6 M0.8 13 L7.6 15.2 L14.4 13 M3 3 V17 M5.4 3.6 V18 M10 3.8 V17.8 M12.2 3.2 V17" stroke="#a6dcf4" stroke-width="0.5" fill="none"/>
<path d="M14.6 8 L18.4 7 L23 8 V13.4 L18.8 14.8 L14.6 13.6Z" fill="#4a98c8" stroke="#2a6e9e" stroke-width="0.5"/><path d="M18.8 9.2 L23 8 V13.4 L18.8 14.8Z" fill="#2c7cb0"/><path d="M14.6 10.6 L18.8 11.8 L23 10.6" stroke="#a6dcf4" stroke-width="0.5" fill="none"/></svg>
<svg class="a" style="left:145px;top:454.6px" width="23" height="22" viewBox="0 0 23 22">
<path d="M9 5 L21.4 3.6 L15.4 20.2 L1 16.2Z" fill="#3b4a66" stroke="#27334a" stroke-width="0.5"/><path d="M1 16.2 L15.4 20.2 L15 21.4 L1.2 17.6Z" fill="#5b6e92"/>
<path d="M9.6 6.6 L19.4 5.6 L14.2 17.4 L3.4 14.6Z" fill="#fdfdfd" stroke="#c6ccd6" stroke-width="0.4"/>
<path d="M13.6 2.2 L18.2 1 L18.8 4 L13.8 5.2Z" fill="#d9dde4" stroke="#6e7788" stroke-width="0.5"/><rect x="15" y="0.2" width="2.4" height="1.6" fill="#444c5c"/></svg>
<svg class="a" style="left:171.4px;top:454.2px" width="19" height="23.4" viewBox="0 0 19 23.4">
<path d="M0.8 23.4 Q0.4 15.6 5 14 L9.4 18 L13.8 14 Q18.6 15.6 18.2 23.4Z" fill="#2a3566"/><path d="M7.4 14.2 L9.4 21 L11.4 14.2Z" fill="#f4f4f6"/><path d="M8.9 16 L9.4 21.4 L9.9 16Z" fill="#1c2240"/>
<path d="M5 14 L7.4 14 L9.4 18Z M13.8 14 L11.4 14 L9.4 18Z" fill="#1d2650"/>
<ellipse cx="9.6" cy="8.2" rx="4.5" ry="5.6" fill="#f1d2b4"/><path d="M12 6 Q14.4 8 13.6 12.6 Q12.6 13.6 11.4 13.8 Q13 10 12 6Z" fill="#d9ad88"/>
<path d="M5 8 Q4.2 1.6 9.6 1.8 Q15.2 1.6 14.2 8.2 Q13.2 5 11.6 4.6 Q8 5.4 5.8 4.8 Q5.2 6 5 8Z" fill="#3a332e"/></svg>

<span class="t" id="t0" style="left:15.0px;top:0px;font-size:8.4px;color:#1c1c24;transform:scaleX(1.041);text-shadow:0 0 3px rgba(255,255,255,0.75),0 0 5px rgba(255,255,255,0.5);">GTech Orkestra v1.0a (build 922) [G-YAZILIM A.S.]</span>
<span class="t" id="t1" style="left:5.5px;top:19px;font-size:8.6px;color:#1a1a1a;transform:scaleX(0.940);">Dosya</span>
<span class="t" id="t2" style="left:39.5px;top:19px;font-size:8.6px;color:#1a1a1a;transform:scaleX(0.995);">Araçlar</span>
<span class="t" id="t3" style="left:76.7px;top:19px;font-size:8.6px;color:#1a1a1a;transform:scaleX(0.978);">Pencere</span>
<span class="t" id="t4" style="left:118.4px;top:19px;font-size:8.6px;color:#1a1a1a;transform:scaleX(1.016);">Yardım</span>
<span class="t" id="t5" style="left:37.7px;top:36px;font-size:8.6px;color:#1a1a1a;transform:scaleX(0.993);">Dosyalama Sistemi</span>
<span class="t" id="t6" style="left:133.8px;top:36px;font-size:8.6px;color:#1a1a1a;transform:scaleX(0.955);">E-Posta</span>
<span class="t" id="t7" style="left:187.6px;top:36px;font-size:8.6px;color:#1a1a1a;transform:scaleX(0.982);">Genel Perspektif</span>
<span class="t" id="t8" style="left:19.6px;top:54px;font-size:8.4px;color:#1b3a78;font-weight:700;transform:scaleX(0.960);">Kullanıcı Kısayolları</span>
<span class="t" id="t9" style="left:11.8px;top:73px;font-size:8.3px;color:#777777;transform:scaleX(1.031);">Sık kullanılan seçeneği sürükleyiniz</span>
<span class="t" id="t10" style="left:19.6px;top:89px;font-size:8.4px;color:#1b3a78;font-weight:700;transform:scaleX(1.002);">E-Posta Yönetimi</span>
<span class="t" id="t11" style="left:12.6px;top:105px;font-size:8.4px;color:#7a7a7a;transform:scaleX(1.038);">Aranacak metin</span>
<span class="t" id="t12" style="left:38.4px;top:123px;font-size:8.4px;color:#1a1a1a;transform:scaleX(1.000);">E-Posta Hesapları</span>
<span class="t" id="t13" style="left:38.4px;top:136px;font-size:8.4px;color:#1a1a1a;transform:scaleX(1.042);">E-Posta Yönlendirme</span>
<span class="t" id="t14" style="left:38.4px;top:149px;font-size:8.4px;color:#1a1a1a;transform:scaleX(1.017);">Genel Spam Filtreleri</span>
<span class="t" id="t15" style="left:38.4px;top:163px;font-size:8.4px;color:#1a1a1a;transform:scaleX(1.007);">Kişisel Spam Filtreleri</span>
<span class="t" id="t16" style="left:38.4px;top:176px;font-size:8.4px;color:#1a1a1a;transform:scaleX(1.061);">Otomatik Cevaplar</span>
<span class="t" id="t17" style="left:38.4px;top:189px;font-size:8.4px;color:#1a1a1a;transform:scaleX(1.013);">E-Posta Sunucusu</span>
<span class="t" id="t18" style="left:38.4px;top:203px;font-size:8.4px;color:#1a1a1a;transform:scaleX(1.035);">Tüm E-Postalar</span>
<span class="t" id="t19" style="left:32.0px;top:365px;font-size:8.4px;color:#151515;font-weight:700;transform:scaleX(1.011);">E-Posta Yönetimi</span>
<span class="t" id="t20" style="left:32.0px;top:389px;font-size:8.4px;color:#1b3a78;font-weight:700;transform:scaleX(1.006);">Faks Yönetimi</span>
<span class="t" id="t21" style="left:32.0px;top:412px;font-size:8.4px;color:#1b3a78;font-weight:700;transform:scaleX(1.026);">Günlük İşlemler</span>
<span class="t" id="t22" style="left:32.0px;top:436px;font-size:8.4px;color:#1b3a78;font-weight:700;transform:scaleX(1.049);">Görev Yönetimi</span>
<span class="t" id="t23" style="left:212.8px;top:55px;font-size:8.4px;color:#1a1a1a;transform:scaleX(1.011);">E-Posta Kullanıcıları</span>
<span class="t" id="t24" style="left:234.0px;top:81px;font-size:8.4px;color:#1a1a1a;transform:scaleX(1.050);">Yeni</span>
<span class="t" id="t25" style="left:286.0px;top:81px;font-size:8.4px;color:#1a1a1a;transform:scaleX(1.046);">Değiştir</span>
<span class="t" id="t26" style="left:349.6px;top:81px;font-size:8.4px;color:#1a1a1a;transform:scaleX(1.055);">İncele</span>
<span class="t" id="t27" style="left:407.9px;top:81px;font-size:8.4px;color:#1a1a1a;transform:scaleX(1.021);">Kopyala</span>
<span class="t" id="t28" style="left:473.8px;top:81px;font-size:8.4px;color:#1a1a1a;transform:scaleX(0.977);">Sil</span>
<span class="t" id="t29" style="left:518.0px;top:81px;font-size:8.4px;color:#1a1a1a;transform:scaleX(0.983);">Yazdır</span>
<span class="t" id="t30" style="left:579.4px;top:81px;font-size:8.4px;color:#1a1a1a;transform:scaleX(1.030);">Filtrele</span>
<span class="t" id="t31" style="left:214.0px;top:106px;font-size:8.4px;color:#141008;font-weight:700;transform:scaleX(0.967);-webkit-text-stroke-width:0.3px;">E-Posta Hesabı</span>
<span class="t" id="t32" style="left:322.0px;top:106px;font-size:8.4px;color:#10131f;font-weight:700;transform:scaleX(0.980);-webkit-text-stroke-width:0.3px;">Kullanıcı Adı</span>
<span class="t" id="t33" style="left:431.0px;top:106px;font-size:8.4px;color:#10131f;font-weight:700;transform:scaleX(0.978);-webkit-text-stroke-width:0.3px;">Kullanıcı Yönl</span>
<span class="t" id="t34" style="left:485.8px;top:106px;font-size:8.3px;color:#55607a;transform:scaleX(0.722);">...</span>
<span class="t" id="t35" style="left:498.0px;top:106px;font-size:8.4px;color:#10131f;font-weight:700;transform:scaleX(1.025);-webkit-text-stroke-width:0.3px;">Kayıt Durumu</span>
<span class="t" id="t36" style="left:576.0px;top:106px;font-size:8.4px;color:#10131f;font-weight:700;transform:scaleX(1.014);-webkit-text-stroke-width:0.3px;">Güncelleme Zam</span>
<span class="t" id="t37" style="left:644.6px;top:106px;font-size:8.3px;color:#55607a;transform:scaleX(0.722);">...</span>
<span class="t" id="t38" style="left:213.6px;top:137px;font-size:8.7px;color:#1a1a1a;transform:scaleX(1.033);">ahmet.gurbuz</span>
<span class="t" id="t39" style="left:498.0px;top:137px;font-size:8.7px;color:#1a1a1a;transform:scaleX(0.987);">Kullanım Dışı</span>
<span class="t" id="t40" style="left:575.6px;top:137px;font-size:8.7px;color:#1a1a1a;transform:scaleX(0.961);">30/06/2011 16:39</span>
<span class="t" id="t41" style="left:213.6px;top:151px;font-size:8.7px;color:#1a1a1a;transform:scaleX(0.932);">aysel</span>
<span class="t" id="t42" style="left:322.0px;top:151px;font-size:8.7px;color:#1a1a1a;transform:scaleX(0.932);">aysel</span>
<span class="t" id="t43" style="left:498.0px;top:151px;font-size:8.7px;color:#1a1a1a;transform:scaleX(1.019);">Kullanımda</span>
<span class="t" id="t44" style="left:575.6px;top:151px;font-size:8.7px;color:#1a1a1a;transform:scaleX(0.961);">25/01/2011 17:10</span>
<span class="t" id="t45" style="left:213.6px;top:165px;font-size:8.7px;color:#1a1a1a;transform:scaleX(0.985);">baris.akyol</span>
<span class="t" id="t46" style="left:498.0px;top:165px;font-size:8.7px;color:#1a1a1a;transform:scaleX(1.019);">Kullanımda</span>
<span class="t" id="t47" style="left:575.6px;top:165px;font-size:8.7px;color:#1a1a1a;transform:scaleX(0.961);">30/06/2011 16:36</span>
<span class="t" id="t48" style="left:213.6px;top:179px;font-size:8.7px;color:#1a1a1a;transform:scaleX(0.983);">canan.aktepe</span>
<span class="t" id="t49" style="left:498.0px;top:179px;font-size:8.7px;color:#1a1a1a;transform:scaleX(1.019);">Kullanımda</span>
<span class="t" id="t50" style="left:575.6px;top:179px;font-size:8.7px;color:#1a1a1a;transform:scaleX(0.961);">30/06/2011 16:39</span>
<span class="t" id="t51" style="left:213.6px;top:193px;font-size:8.7px;color:#ffffff;transform:scaleX(1.023);">deniz.duman</span>
<span class="t" id="t52" style="left:498.0px;top:193px;font-size:8.7px;color:#ffffff;transform:scaleX(0.993);">Bloke Edilmiş</span>
<span class="t" id="t53" style="left:575.6px;top:193px;font-size:8.7px;color:#ffffff;transform:scaleX(0.961);">30/06/2011 16:39</span>
<span class="t" id="t54" style="left:213.6px;top:207px;font-size:8.7px;color:#1a1a1a;transform:scaleX(0.957);">ebrar</span>
<span class="t" id="t55" style="left:322.0px;top:207px;font-size:8.7px;color:#1a1a1a;transform:scaleX(0.957);">ebrar</span>
<span class="t" id="t56" style="left:498.0px;top:207px;font-size:8.7px;color:#1a1a1a;transform:scaleX(1.019);">Kullanımda</span>
<span class="t" id="t57" style="left:575.6px;top:207px;font-size:8.7px;color:#1a1a1a;transform:scaleX(0.961);">28/04/2011 14:58</span>
<span class="t" id="t58" style="left:213.6px;top:221px;font-size:8.7px;color:#1a1a1a;transform:scaleX(1.033);">eylul.koruk</span>
<span class="t" id="t59" style="left:431.3px;top:221px;font-size:8.7px;color:#1a1a1a;transform:scaleX(0.932);">aysel</span>
<span class="t" id="t60" style="left:498.0px;top:221px;font-size:8.7px;color:#1a1a1a;transform:scaleX(1.019);">Kullanımda</span>
<span class="t" id="t61" style="left:575.6px;top:221px;font-size:8.7px;color:#1a1a1a;transform:scaleX(0.961);">30/06/2011 16:38</span>
<span class="t" id="t62" style="left:213.6px;top:236px;font-size:8.7px;color:#1a1a1a;transform:scaleX(1.013);">fahri.cataltepe</span>
<span class="t" id="t63" style="left:498.0px;top:236px;font-size:8.7px;color:#1a1a1a;transform:scaleX(0.987);">Kullanım Dışı</span>
<span class="t" id="t64" style="left:575.6px;top:236px;font-size:8.7px;color:#1a1a1a;transform:scaleX(0.961);">30/06/2011 16:38</span>
<span class="t" id="t65" style="left:213.6px;top:250px;font-size:8.7px;color:#1a1a1a;transform:scaleX(1.009);">gokay</span>
<span class="t" id="t66" style="left:322.0px;top:250px;font-size:8.7px;color:#1a1a1a;transform:scaleX(1.060);">admin</span>
<span class="t" id="t67" style="left:498.0px;top:250px;font-size:8.7px;color:#1a1a1a;transform:scaleX(1.019);">Kullanımda</span>
<span class="t" id="t68" style="left:575.6px;top:250px;font-size:8.7px;color:#1a1a1a;transform:scaleX(0.961);">21/04/2011 08:41</span>
<span class="t" id="t69" style="left:213.6px;top:264px;font-size:8.7px;color:#1a1a1a;transform:scaleX(0.973);">hanzade.berra</span>
<span class="t" id="t70" style="left:498.0px;top:264px;font-size:8.7px;color:#1a1a1a;transform:scaleX(1.019);">Kullanımda</span>
<span class="t" id="t71" style="left:575.6px;top:264px;font-size:8.7px;color:#1a1a1a;transform:scaleX(0.961);">30/06/2011 16:37</span>
<span class="t" id="t72" style="left:213.6px;top:278px;font-size:8.7px;color:#1a1a1a;transform:scaleX(1.013);">ipek.lal</span>
<span class="t" id="t73" style="left:498.0px;top:278px;font-size:8.7px;color:#1a1a1a;transform:scaleX(0.987);">Kullanım Dışı</span>
<span class="t" id="t74" style="left:575.6px;top:278px;font-size:8.7px;color:#1a1a1a;transform:scaleX(0.961);">30/06/2011 16:40</span>
<span class="t" id="t75" style="left:213.6px;top:292px;font-size:8.7px;color:#1a1a1a;transform:scaleX(1.000);">kemal.er</span>
<span class="t" id="t76" style="left:498.0px;top:292px;font-size:8.7px;color:#1a1a1a;transform:scaleX(1.019);">Kullanımda</span>
<span class="t" id="t77" style="left:575.6px;top:292px;font-size:8.7px;color:#1a1a1a;transform:scaleX(0.961);">30/06/2011 16:40</span>
<span class="t" id="t78" style="left:213.6px;top:306px;font-size:8.7px;color:#1a1a1a;transform:scaleX(1.040);">marketing</span>
<span class="t" id="t79" style="left:322.0px;top:306px;font-size:8.7px;color:#1a1a1a;transform:scaleX(1.060);">admin</span>
<span class="t" id="t80" style="left:498.0px;top:306px;font-size:8.7px;color:#1a1a1a;transform:scaleX(1.019);">Kullanımda</span>
<span class="t" id="t81" style="left:575.6px;top:306px;font-size:8.7px;color:#1a1a1a;transform:scaleX(0.961);">06/04/2011 13:37</span>
<span class="t" id="t82" style="left:213.6px;top:320px;font-size:8.7px;color:#1a1a1a;transform:scaleX(1.014);">yasemin.uygur</span>
<span class="t" id="t83" style="left:498.0px;top:320px;font-size:8.7px;color:#1a1a1a;transform:scaleX(0.993);">Bloke Edilmiş</span>
<span class="t" id="t84" style="left:575.6px;top:320px;font-size:8.7px;color:#1a1a1a;transform:scaleX(0.961);">30/06/2011 16:38</span>
<span class="t" id="t85" style="left:200.4px;top:462px;font-size:8.4px;color:#1a1a1a;transform:scaleX(0.985);">Kayıt Listesi</span>
<span class="t" id="t86" style="left:251.7px;top:462px;font-size:8.4px;color:#1a1a1a;transform:scaleX(1.014);">Filtreler</span>
<span class="t" id="t87" style="left:286.3px;top:462px;font-size:8.4px;color:#1a1a1a;transform:scaleX(0.999);">Raporlar</span>
<span class="t" id="t88" style="left:229.5px;top:484px;font-size:8.4px;color:#1a1a1a;transform:scaleX(0.996);">ays</span>
<span class="t" id="t89" style="left:375.8px;top:482px;font-size:8.4px;color:#1a1a1a;transform:scaleX(1.025);">17M</span>
<span class="t" id="t90" style="left:395.5px;top:482px;font-size:8.4px;color:#1a1a1a;transform:scaleX(1.098);">/ 35M</span>
</body></html>
